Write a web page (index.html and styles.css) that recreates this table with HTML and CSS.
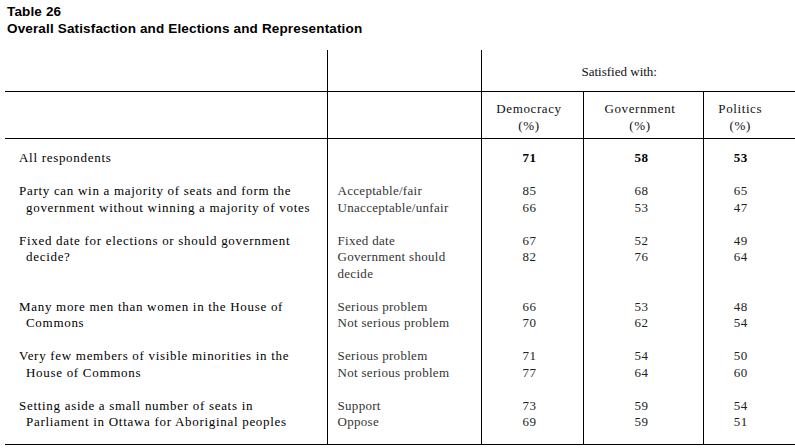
FILE: index.html
```html
<!DOCTYPE html>
<html lang="en">
<head>
<meta charset="utf-8">
<title>Table 26</title>
<link rel="stylesheet" href="styles.css">
</head>
<body>
<div class="page">
  <div class="title">
    <div>Table 26</div>
    <div>Overall Satisfaction and Elections and Representation</div>
  </div>
  <table class="tbl">
    <colgroup>
      <col class="w-label">
      <col class="w-cat">
      <col class="w-dem">
      <col class="w-gov">
      <col class="w-pol">
    </colgroup>
    <thead>
      <tr class="h1">
        <th class="label"></th>
        <th class="cat"></th>
        <th colspan="3" class="sat">Satisfied with:</th>
      </tr>
      <tr class="h2">
        <th class="label"></th>
        <th class="cat"></th>
        <th class="num dem">Democracy<br>(%)</th>
        <th class="num gov">Government<br>(%)</th>
        <th class="num pol">Politics<br>(%)</th>
      </tr>
    </thead>
    <tbody>
      <tr class="first">
        <td class="label">All respondents</td>
        <td class="cat"></td>
        <td class="num dem"><b>71</b></td>
        <td class="num gov"><b>58</b></td>
        <td class="num pol"><b>53</b></td>
      </tr>
      <tr>
        <td class="label">Party can win a majority of seats and form the<br>government without winning a majority of votes</td>
        <td class="cat">Acceptable/fair<br>Unacceptable/unfair</td>
        <td class="num dem">85<br>66</td>
        <td class="num gov">68<br>53</td>
        <td class="num pol">65<br>47</td>
      </tr>
      <tr>
        <td class="label">Fixed date for elections or should government<br>decide?</td>
        <td class="cat">Fixed date<br>Government should<br>decide</td>
        <td class="num dem">67<br>82</td>
        <td class="num gov">52<br>76</td>
        <td class="num pol">49<br>64</td>
      </tr>
      <tr>
        <td class="label">Many more men than women in the House of<br>Commons</td>
        <td class="cat">Serious problem<br>Not serious problem</td>
        <td class="num dem">66<br>70</td>
        <td class="num gov">53<br>62</td>
        <td class="num pol">48<br>54</td>
      </tr>
      <tr>
        <td class="label">Very few members of visible minorities in the<br>House of Commons</td>
        <td class="cat">Serious problem<br>Not serious problem</td>
        <td class="num dem">71<br>77</td>
        <td class="num gov">54<br>64</td>
        <td class="num pol">50<br>60</td>
      </tr>
      <tr class="last">
        <td class="label">Setting aside a small number of seats in<br>Parliament in Ottawa for Aboriginal peoples</td>
        <td class="cat">Support<br>Oppose</td>
        <td class="num dem">73<br>69</td>
        <td class="num gov">59<br>59</td>
        <td class="num pol">54<br>51</td>
      </tr>
    </tbody>
  </table>
</div>
</body>
</html>
```

FILE: styles.css
```css
html, body {
  margin: 0;
  padding: 0;
  background: #ffffff;
}

.page {
  width: 795px;
  height: 448px;
  overflow: hidden;
  color: #000;
}

.title {
  padding: 3px 0 0 7px;
  font-family: "Liberation Sans", Arial, sans-serif;
  font-weight: bold;
  font-size: 13.5px;
  line-height: 17px;
  letter-spacing: 0.15px;
  height: 50px;
  box-sizing: border-box;
}

.tbl {
  margin-left: 5px;
  width: 790px;
  table-layout: fixed;
  border-collapse: collapse;
  border-bottom: 1px solid #000;
  font-family: "Liberation Serif", "Times New Roman", serif;
  font-size: 13px;
  line-height: 16.5px;
  letter-spacing: 0.7px;
}

.w-label { width: 322px; }
.w-cat { width: 154px; }
.w-dem { width: 102px; }
.w-gov { width: 120px; }
.w-pol { width: 92px; }

.tbl th,
.tbl td {
  padding: 0;
  font-weight: normal;
  vertical-align: top;
  white-space: nowrap;
}

.tbl th.label,
.tbl td.label,
.tbl th.cat,
.tbl td.cat,
.tbl th.dem,
.tbl td.dem,
.tbl th.gov,
.tbl td.gov {
  border-right: 1px solid #000;
}

.h1 th {
  height: 30px;
  border-bottom: 1px solid #000;
  vertical-align: bottom;
  padding-bottom: 11px;
}

.tbl .h1 th.sat {
  text-align: left;
  padding-left: 100px;
  letter-spacing: 0;
  color: #111;
}

.h2 th {
  height: 47px;
  border-bottom: 1px solid #000;
  padding-top: 9px;
  box-sizing: border-box;
  color: #111;
  letter-spacing: 0.6px;
}

.num {
  text-align: center;
  color: #222;
}

.tbl td.num { letter-spacing: 0.6px; }
.tbl td.num.dem { padding-right: 5px; }
.tbl td.num.gov { padding-right: 3px; }
.tbl td.num.pol { padding-right: 17px; }

.tbl th.num.dem { padding-right: 6px; }
.tbl th.num.gov { padding-right: 6px; }
.tbl th.num.pol { padding-right: 18px; }

.tbl td {
  padding-bottom: 16.5px;
}

.tbl tr.first td {
  padding-top: 11px;
}

.tbl tr.last td {
  padding-bottom: 13px;
  border-bottom: 1px solid #000;
}

.tbl td.label {
  padding-left: 21px;
  text-indent: -7px;
}

.tbl td.cat {
  padding-left: 10px;
  letter-spacing: 0.3px;
  color: #333;
}

.num b {
  font-weight: bold;
  color: #000;
}
```
